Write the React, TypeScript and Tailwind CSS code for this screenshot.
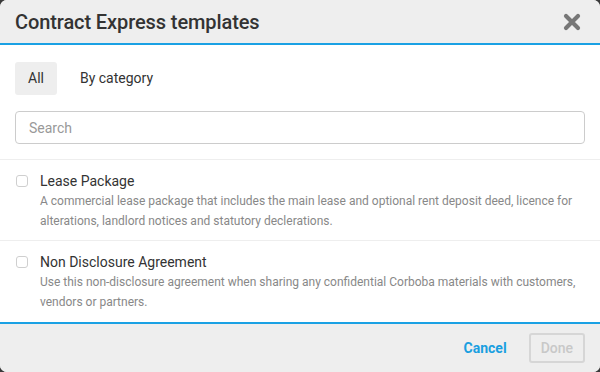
import React from "react";

const templates = [
  {
    title: "Lease Package",
    description:
      "A commercial lease package that includes the main lease and optional rent deposit deed, licence for alterations, landlord notices and statutory declerations.",
  },
  {
    title: "Non Disclosure Agreement",
    description:
      "Use this non-disclosure agreement when sharing any confidential Corboba materials with customers, vendors or partners.",
  },
];

export default function App() {
  return (
    <div className="w-[600px] h-[372px] bg-[#3a3a3a] font-['Roboto',sans-serif]">
      <div className="w-full h-full flex flex-col bg-white rounded-[7px] overflow-hidden">
        {/* header */}
        <div className="h-[45px] shrink-0 bg-[#eeeeee] border-b-2 border-[#1aa1e4] flex items-center justify-between pl-[15px] pr-[19px]">
          <h1 className="text-[20px] font-medium text-[#333] tracking-[-0.1px]">Contract Express templates</h1>
          <svg width="18" height="18" viewBox="0 0 18 18" className="text-[#777]">
            <path d="M3 3 L15 15 M15 3 L3 15" stroke="currentColor" strokeWidth="4.2" strokeLinecap="round" />
          </svg>
        </div>

        {/* body */}
        <div className="flex-1 flex flex-col">
          <div className="px-[15px] pt-[17px]">
            <div className="flex items-center gap-[10px] text-[14px] text-[#333]">
              <button className="h-[33px] px-[13px] rounded-[3px] bg-[#eeeeee]">All</button>
              <button className="h-[33px] px-[13px]">By category</button>
            </div>
            <input
              placeholder="Search"
              className="mt-[16px] w-full h-[33px] border border-[#cccccc] rounded-[4px] px-[13px] text-[14px] placeholder:text-[#999] outline-none"
            />
          </div>

          <div className="mt-[15px] border-t border-[#eeeeee]">
            {templates.map((t, i) => (
              <div
                key={t.title}
                className={`flex gap-[12px] pl-[16px] pr-[15px] pt-[11px] ${i === 0 ? "pb-[9px] border-b border-[#eeeeee]" : "pt-[9px]"}`}
              >
                <div className="mt-[4px] w-[12px] h-[12px] shrink-0 border border-[#cfcfcf] rounded-[3px] bg-white" />
                <div>
                  <div className="text-[14px] text-[#333] leading-[20px]">{t.title}</div>
                  <p className="text-[12px] text-[#888] leading-[20px]">{t.description}</p>
                </div>
              </div>
            ))}
          </div>
        </div>

        {/* footer */}
        <div className="h-[50px] shrink-0 bg-[#eeeeee] border-t-2 border-[#1aa1e4] flex items-center justify-end gap-[22px] pr-[15px]">
          <button className="text-[14px] font-bold text-[#1a9fe0]">Cancel</button>
          <button className="h-[30px] px-[10px] border-2 border-[#d6d6d6] rounded-[3px] text-[14px] font-medium text-[#c8c8c8]">
            Done
          </button>
        </div>
      </div>
    </div>
  );
}
